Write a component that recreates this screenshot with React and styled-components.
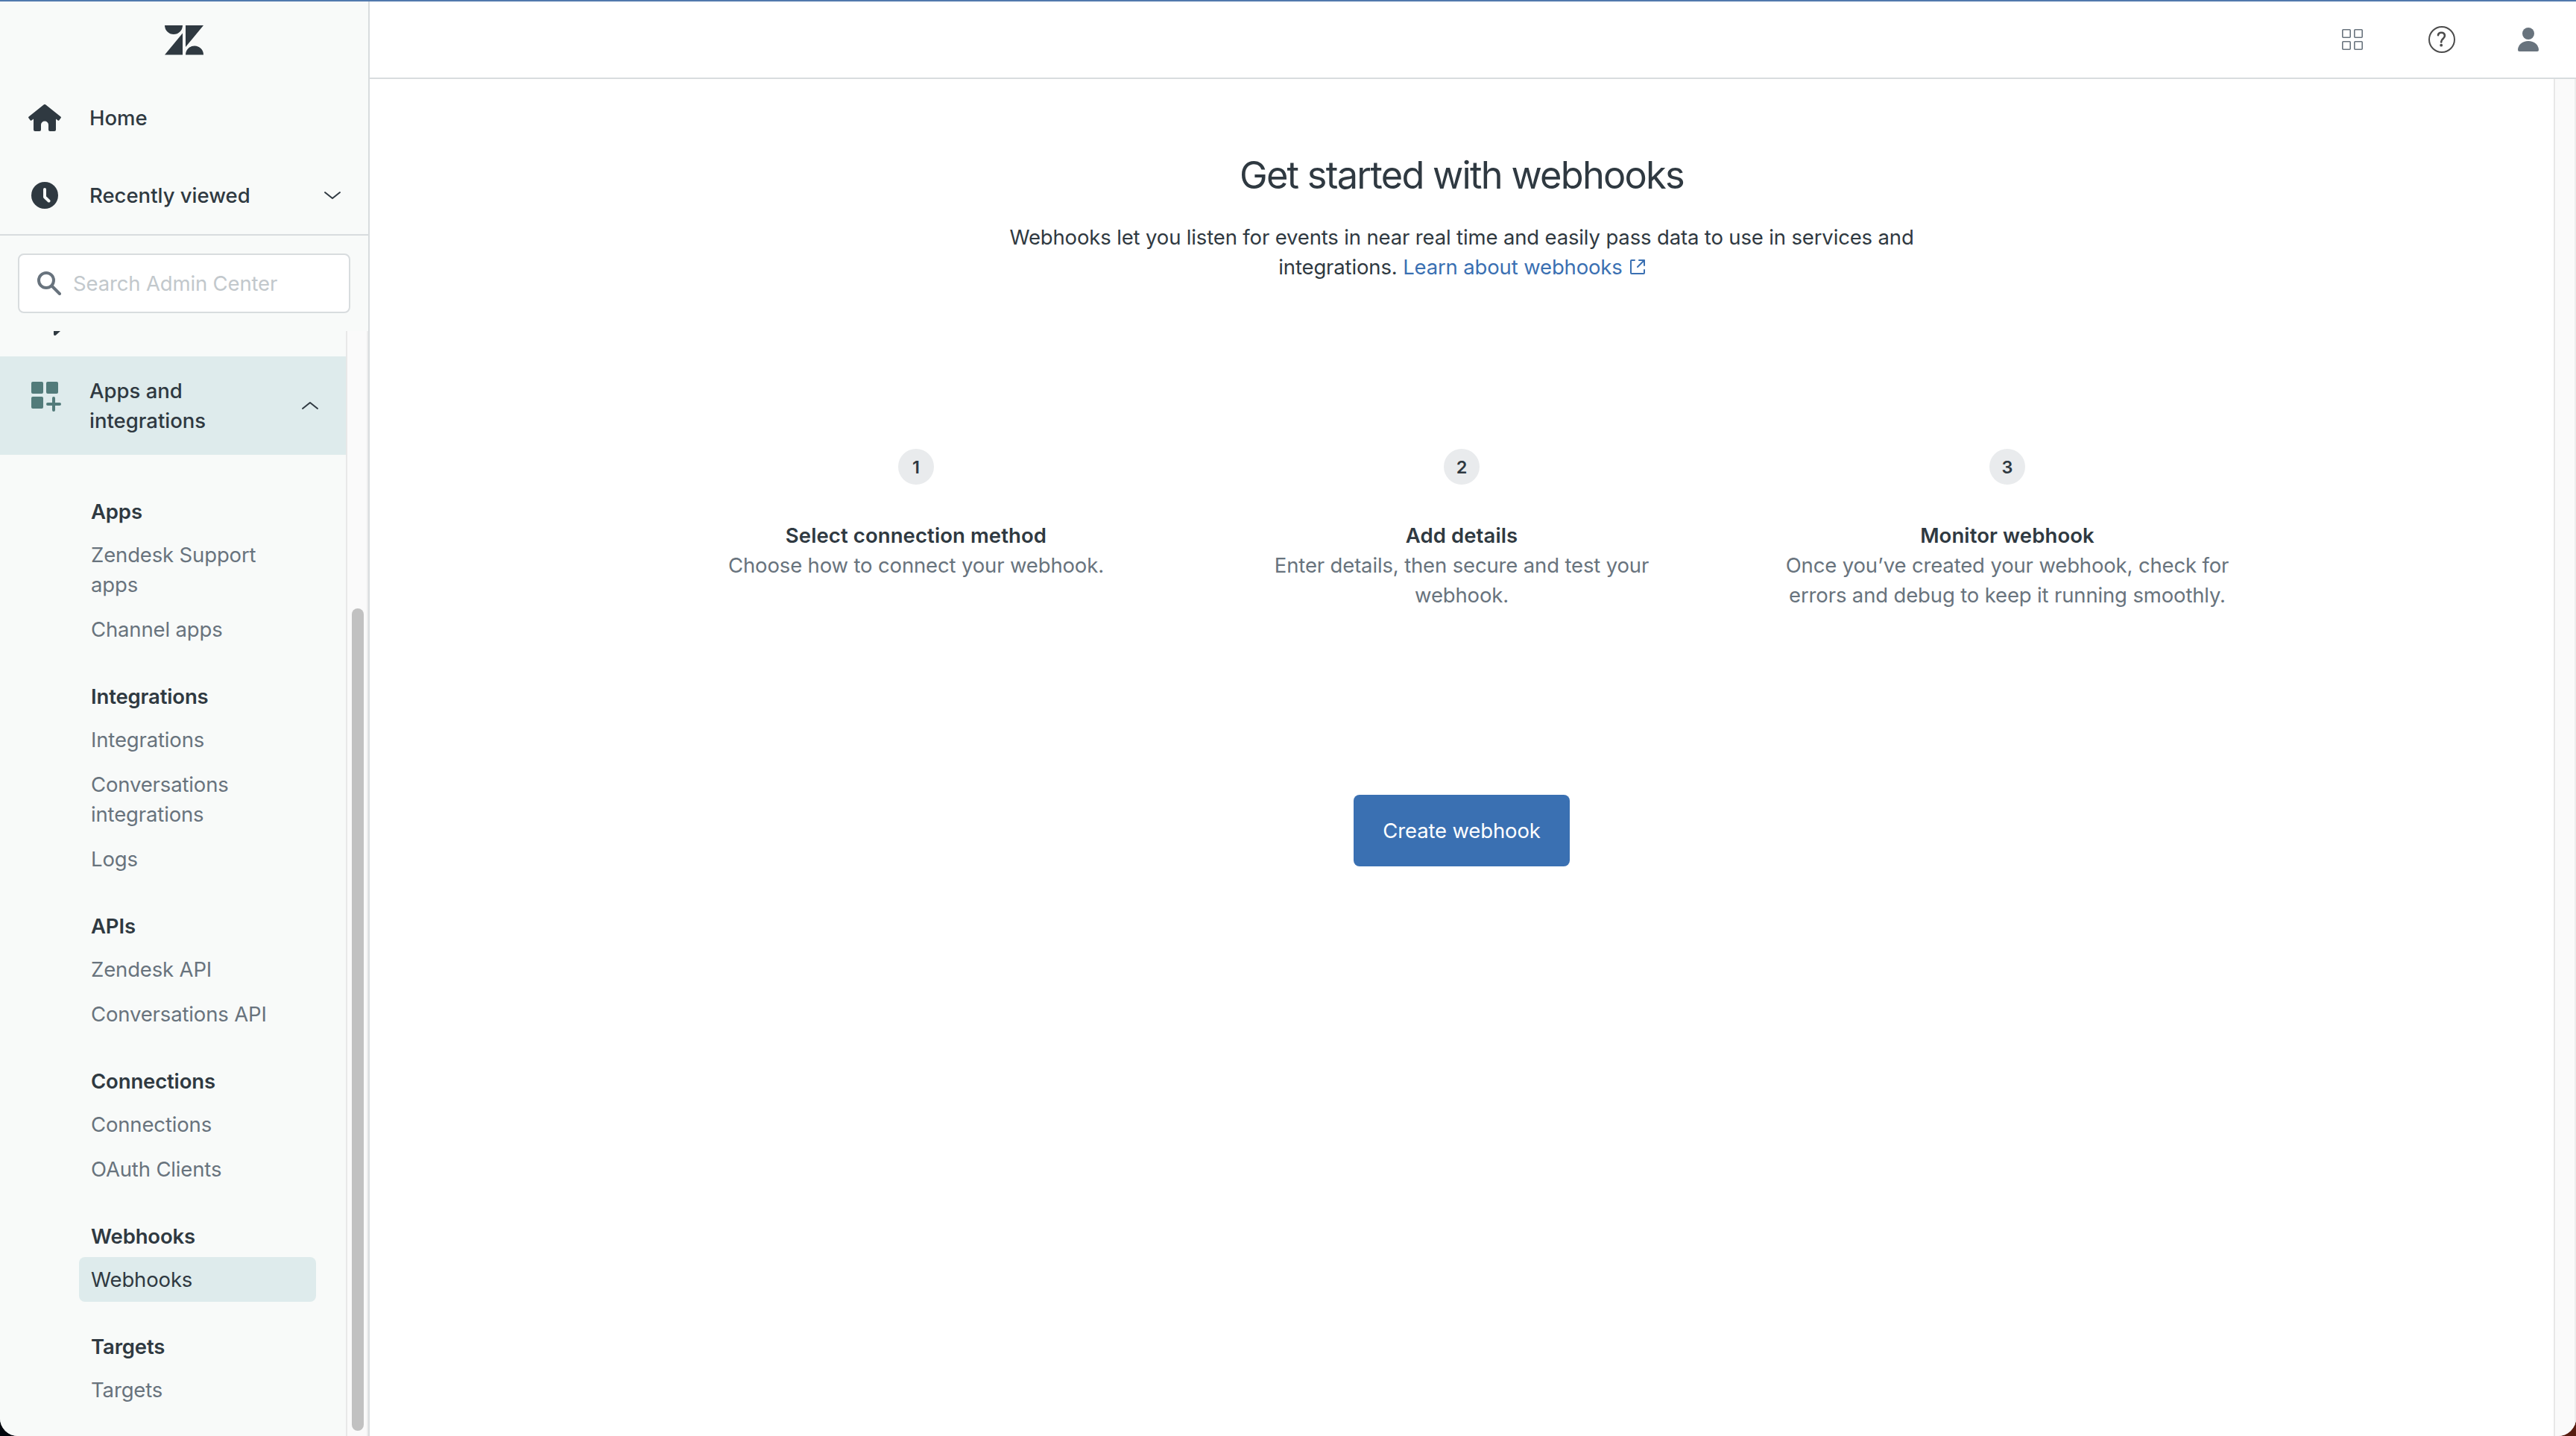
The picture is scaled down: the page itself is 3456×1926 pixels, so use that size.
import styled, { createGlobalStyle } from "styled-components";

const GlobalStyle = createGlobalStyle`
  * {
    box-sizing: border-box;
  }
  body {
    margin: 0;
    background: linear-gradient(to right, #02060d 50%, #571c10 50%);
    color: #2f3941;
    font-family: Inter, "Liberation Sans", sans-serif;
    font-size: 27.5px;
    line-height: 40px;
    letter-spacing: -0.15px;
  }
`;

const Frame = styled.div`
  display: flex;
  flex-direction: column;
  width: 100vw;
  height: 100vh;
  overflow: hidden;
  background-color: #fff;
  border-top: 2px solid #5179ad;
  border-radius: 0 0 24px 24px;
`;

const Columns = styled.div`
  display: flex;
  flex: 1;
  min-height: 0;
`;

const Sidebar = styled.aside`
  display: flex;
  flex-direction: column;
  width: 496px;
  background-color: #f8faf9;
  border-right: 2px solid #d8dcde;
`;

const LogoBar = styled.div`
  display: flex;
  justify-content: center;
  height: 104px;
  padding-top: 32px;
`;

const TopLink = styled.div`
  display: flex;
  align-items: center;
  height: 104px;
  padding: 0 36px 0 38px;
  font-weight: 500;
`;

const IconSlot = styled.div`
  display: flex;
  justify-content: center;
  width: 44px;
  margin-right: 38px;
`;

const LinkText = styled.span`
  flex: 1;
  letter-spacing: 0;
`;

const SearchArea = styled.div`
  height: 130px;
  padding: 24px;
  border-top: 2px solid #d8dcde;
`;

const SearchBox = styled.div`
  display: flex;
  align-items: center;
  gap: 16px;
  height: 80px;
  padding: 0 24px;
  background-color: #fff;
  border: 2px solid #d8dcde;
  border-radius: 8px;
  color: #c2c8cc;
`;

const ScrollArea = styled.div`
  display: flex;
  flex: 1;
  min-height: 0;
`;

const Nav = styled.nav`
  flex: 1;
  overflow: hidden;
`;

const HiddenRow = styled.div`
  height: 34px;
  padding-left: 72px;

  svg {
    display: block;
  }
`;

const ActiveRow = styled.div`
  display: flex;
  align-items: center;
  height: 132px;
  padding: 0 36px 0 38px;
  background-color: #deebec;
  font-weight: 500;
`;

const ActiveIcon = styled(IconSlot)`
  align-self: flex-start;
  padding: 34px 0 0 4px;
`;

const Groups = styled.div`
  display: flex;
  flex-direction: column;
  gap: 40px;
  padding: 56px 40px 0 106px;
`;

const GroupTitle = styled.div`
  padding-left: 16px;
  margin-bottom: 8px;
  font-weight: 600;
`;

const GroupItem = styled.div`
  padding: 10px 48px 10px 16px;
  border-radius: 8px;
  color: ${(props) => (props.$active ? "#2f3941" : "#68737d")};
  background-color: ${(props) => (props.$active ? "#deebec" : "transparent")};
`;

const SidebarTrack = styled.div`
  width: 30px;
  padding: 372px 4px 0 6px;
  background-color: #fafafa;
  border-left: 2px solid #e8e8e8;
  border-right: 2px solid #ededed;
`;

const Thumb = styled.div`
  width: 16px;
  height: 1103px;
  border-radius: 8px;
  background-color: #c1c1c1;
`;

const Main = styled.div`
  display: flex;
  flex: 1;
  flex-direction: column;
`;

const Header = styled.header`
  display: flex;
  align-items: center;
  justify-content: flex-end;
  height: 104px;
  padding-right: 50px;
  border-bottom: 2px solid #d8dcde;
`;

const HelpSlot = styled.div`
  display: flex;
  margin: 0 84px 0 88px;
`;

const Body = styled.div`
  display: flex;
  flex: 1;
`;

const Content = styled.main`
  display: flex;
  flex: 1;
  flex-direction: column;
  align-items: center;
  padding-top: 101px;
`;

const PageTrack = styled.div`
  width: 30px;
  background-color: #fafafa;
  border-left: 2px solid #e8e8e8;
  border-right: 2px solid #ededed;
`;

const Title = styled.h1`
  margin: 0;
  font-size: 50.5px;
  font-weight: 400;
  line-height: 56px;
  letter-spacing: -1.75px;
`;

const Intro = styled.p`
  width: 1240px;
  margin: 35px 0 0;
  text-align: center;
`;

const LearnLink = styled.a`
  color: #3a70b2;

  svg {
    margin-left: 10px;
  }
`;

const Steps = styled.div`
  display: grid;
  grid-template-columns: repeat(3, 732px);
  margin-top: 224px;
`;

const Step = styled.div`
  display: flex;
  flex-direction: column;
  align-items: center;
  padding: 0 60px;
  text-align: center;
`;

const StepNumber = styled.div`
  width: 48px;
  height: 48px;
  margin-bottom: 48px;
  border-radius: 50%;
  background-color: #e9ebed;
  font-size: 23.5px;
  font-weight: 600;
  line-height: 49px;
`;

const StepTitle = styled.div`
  font-weight: 600;
  letter-spacing: 0.1px;
`;

const StepText = styled.div`
  color: #68737d;
`;

const CreateButton = styled.button`
  width: 290px;
  height: 96px;
  margin-top: 248px;
  padding: 0;
  border: none;
  border-radius: 8px;
  background-color: #3a70b2;
  color: #fff;
  font: inherit;
  letter-spacing: inherit;
`;

const groups = [
  { title: "Apps", items: ["Zendesk Support apps", "Channel apps"] },
  {
    title: "Integrations",
    items: ["Integrations", "Conversations integrations", "Logs"],
  },
  { title: "APIs", items: ["Zendesk API", "Conversations API"] },
  { title: "Connections", items: ["Connections", "OAuth Clients"] },
  { title: "Webhooks", items: ["Webhooks"], active: "Webhooks" },
  { title: "Targets", items: ["Targets"] },
];

const steps = [
  {
    title: "Select connection method",
    text: "Choose how to connect your webhook.",
  },
  {
    title: "Add details",
    text: "Enter details, then secure and test your webhook.",
  },
  {
    title: "Monitor webhook",
    text: "Once you’ve created your webhook, check for errors and debug to keep it running smoothly.",
  },
];

const Logo = () => (
  <svg width="52" height="40" viewBox="0 0 52 40" fill="#2f3941">
    <path d="M0 0h24a12 12 0 0 1-24 0zM24 10.5v29H0zM28 0h24L28 29zM28 39.5a12 12 0 0 1 24 0z" />
  </svg>
);

const HomeIcon = () => (
  <svg width="44" height="36" viewBox="0 0 44 36" fill="#2f3941">
    <path d="M20.6.5a2.200 2.200 0 0 1 2.800 0L43.400 16.600a1.200 1.200 0 0 1 .2 1.700l-2.200 2.900a1.200 1.200 0 0 1-1.700.2L37 19.500V34a2 2 0 0 1-2 2h-6a2 2 0 0 1-2-2v-6.500a5 5 0 0 0-10 0V34a2 2 0 0 1-2 2H9a2 2 0 0 1-2-2V19.500l-2.700 1.900a1.200 1.200 0 0 1-1.700-.2L.4 18.300a1.200 1.200 0 0 1 .2-1.700z" />
  </svg>
);

const ClockIcon = () => (
  <svg width="36" height="36" viewBox="0 0 36 36">
    <circle cx="18" cy="18" r="18" fill="#2f3941" />
    <path
      d="M18 10v10.200l5.500 5.300"
      fill="none"
      stroke="#f8faf9"
      strokeWidth="4"
      strokeLinecap="round"
      strokeLinejoin="round"
    />
  </svg>
);

const Chevron = ({ up }) => (
  <svg
    width="24"
    height="12"
    viewBox="0 0 24 12"
    fill="none"
    stroke="#2f3941"
    strokeWidth="2"
    strokeLinecap="round"
    strokeLinejoin="round"
  >
    <path d={up ? "M2 10l10-8 10 8" : "M2 2l10 8 10-8"} />
  </svg>
);

const SearchIcon = () => (
  <svg
    width="32"
    height="32"
    viewBox="0 0 32 32"
    fill="none"
    stroke="#68737d"
    strokeWidth="4"
    strokeLinecap="round"
  >
    <circle cx="12" cy="12" r="10" />
    <path d="M19.500 19.500L30 30" />
  </svg>
);

const AppsIcon = () => (
  <svg width="40" height="40" viewBox="0 0 40 40" fill="#527b7a">
    <rect width="16" height="16" rx="2" />
    <rect x="20" width="16" height="16" rx="2" />
    <rect y="20" width="16" height="16" rx="2" />
    <path
      d="M30 22v16M22 30h16"
      stroke="#527b7a"
      strokeWidth="4"
      strokeLinecap="round"
    />
  </svg>
);

const GridIcon = () => (
  <svg
    width="28"
    height="28"
    viewBox="0 0 28 28"
    fill="none"
    stroke="#68737d"
    strokeWidth="1.6"
  >
    <rect x="0.800" y="0.800" width="10.400" height="10.400" rx="1" />
    <rect x="16.800" y="0.800" width="10.400" height="10.400" rx="1" />
    <rect x="0.800" y="16.800" width="10.400" height="10.400" rx="1" />
    <rect x="16.800" y="16.800" width="10.400" height="10.400" rx="1" />
  </svg>
);

const HelpIcon = () => (
  <svg width="36" height="36" viewBox="0 0 36 36" fill="none">
    <circle cx="18" cy="18" r="17" stroke="#4c4c4c" strokeWidth="2" />
    <path
      d="M13 12.200C13.200 10 15 8.800 17.300 8.800c2.800 0 4.600 1.600 4.600 4.200 0 3.800-4.700 4.200-4.700 8v.4"
      stroke="#4c4c4c"
      strokeWidth="2.600"
      strokeLinecap="round"
    />
    <circle cx="17.200" cy="25.700" r="1.900" fill="#4c4c4c" />
  </svg>
);

const UserIcon = () => (
  <svg width="28" height="32" viewBox="0 0 28 32" fill="#68737d">
    <circle cx="14" cy="8" r="8" />
    <path d="M14 18c8 0 14 5.500 14 12a2 2 0 0 1-2 2H2a2 2 0 0 1-2-2c0-6.500 6-12 14-12z" />
  </svg>
);

const NewWindowIcon = () => (
  <svg
    width="20"
    height="20"
    viewBox="0 0 20 20"
    fill="none"
    stroke="#3a70b2"
    strokeWidth="2"
    strokeLinecap="round"
    strokeLinejoin="round"
  >
    <path d="M6 1H2a1 1 0 0 0-1 1v16a1 1 0 0 0 1 1h16a1 1 0 0 0 1-1v-4M12 1h7v7M19 1l-9 9" />
  </svg>
);

const App = () => {
  return (
    <Frame>
      <GlobalStyle />
      <Columns>
        <Sidebar>
          <LogoBar>
            <Logo />
          </LogoBar>
          <TopLink>
            <IconSlot>
              <HomeIcon />
            </IconSlot>
            <LinkText>Home</LinkText>
          </TopLink>
          <TopLink>
            <IconSlot>
              <ClockIcon />
            </IconSlot>
            <LinkText>Recently viewed</LinkText>
            <Chevron />
          </TopLink>
          <SearchArea>
            <SearchBox>
              <SearchIcon />
              Search Admin Center
            </SearchBox>
          </SearchArea>
          <ScrollArea>
            <Nav>
              {/* only the tip of this row's icon is left below the search box */}
              <HiddenRow>
                <svg width="10" height="6" viewBox="0 0 10 6" fill="#2f3941">
                  <path d="M0 0h9L3 5.500Q0 7 0 4z" />
                </svg>
              </HiddenRow>
              <ActiveRow>
                <ActiveIcon>
                  <AppsIcon />
                </ActiveIcon>
                <LinkText>
                  Apps and
                  <br />
                  integrations
                </LinkText>
                <Chevron up />
              </ActiveRow>
              <Groups>
                {groups.map((group) => (
                  <div key={group.title}>
                    <GroupTitle>{group.title}</GroupTitle>
                    {group.items.map((item) => (
                      <GroupItem key={item} $active={item === group.active}>
                        {item}
                      </GroupItem>
                    ))}
                  </div>
                ))}
              </Groups>
            </Nav>
            <SidebarTrack>
              <Thumb />
            </SidebarTrack>
          </ScrollArea>
        </Sidebar>
        <Main>
          <Header>
            <GridIcon />
            <HelpSlot>
              <HelpIcon />
            </HelpSlot>
            <UserIcon />
          </Header>
          <Body>
            <Content>
              <Title>Get started with webhooks</Title>
              <Intro>
                Webhooks let you listen for events in near real time and easily
                pass data to use in services and integrations.{" "}
                <LearnLink>
                  Learn about webhooks
                  <NewWindowIcon />
                </LearnLink>
              </Intro>
              <Steps>
                {steps.map((step, i) => (
                  <Step key={step.title}>
                    <StepNumber>{i + 1}</StepNumber>
                    <StepTitle>{step.title}</StepTitle>
                    <StepText>{step.text}</StepText>
                  </Step>
                ))}
              </Steps>
              <CreateButton>Create webhook</CreateButton>
            </Content>
            <PageTrack />
          </Body>
        </Main>
      </Columns>
    </Frame>
  );
};

export default App;
